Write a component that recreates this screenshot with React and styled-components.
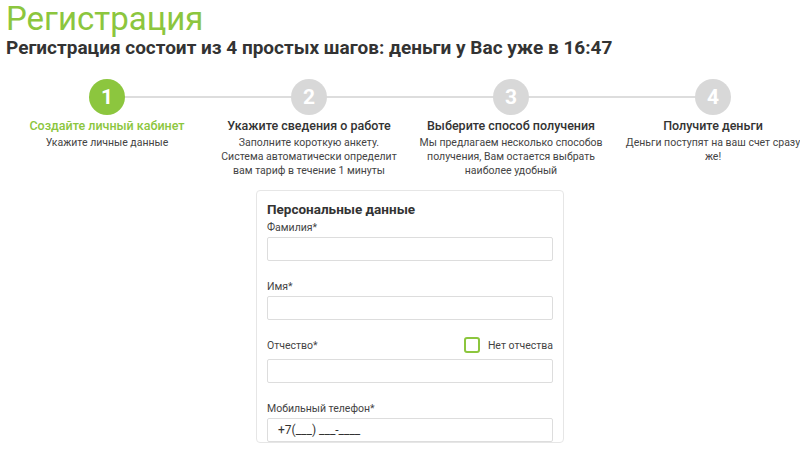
import React from 'react';
import styled, { createGlobalStyle } from 'styled-components';

const Global = createGlobalStyle`
  body { margin: 0; background: #fff; font-family: Roboto, "Noto Sans", sans-serif; color: #333; }
`;

const Page = styled.div`
  padding: 0 6px;
  width: 808px;
`;

const Title = styled.h1`
  margin: 0;
  font-size: 33px;
  font-weight: 400;
  color: #8cc63e;
  line-height: 38px;
`;

const Sub = styled.h2`
  margin: -2px 0 0;
  font-size: 19px;
  font-weight: 700;
  color: #333;
  line-height: 24px;
`;

const Steps = styled.div`
  position: relative;
  display: grid;
  grid-template-columns: repeat(4, 202px);
  margin-top: 19px;
  &::before {
    content: '';
    position: absolute;
    left: 101px;
    right: 99px;
    top: 17px;
    height: 2px;
    background: #ddd;
  }
`;

const Step = styled.div`
  display: flex;
  flex-direction: column;
  align-items: center;
  text-align: center;
  position: relative;
`;

const Circle = styled.div`
  width: 36px;
  height: 36px;
  border-radius: 50%;
  background: ${p => (p.$active ? '#8cc63e' : '#d8d8d8')};
  color: #fff;
  font-size: 21px;
  font-weight: 700;
  display: flex;
  align-items: center;
  justify-content: center;
`;

const StepTitle = styled.div`
  margin-top: 3px;
  font-size: 12.5px;
  font-weight: 500;
  color: ${p => (p.$active ? '#8cc63e' : '#333')};
`;

const StepDesc = styled.div`
  margin-top: 3px;
  font-size: 10.5px;
  line-height: 14px;
  color: #444;
  width: 184px;
`;

const Card = styled.div`
  width: 286px;
  margin: 12px 0 0 250px;
  border: 1px solid #e6e6e6;
  border-radius: 4px;
  padding: 10px 10px 0;
`;

const CardTitle = styled.div`
  font-size: 13.5px;
  font-weight: 700;
  color: #333;
`;

const Field = styled.div`
  margin-top: ${p => p.$gap}px;
`;

const LabelRow = styled.div`
  display: flex;
  justify-content: space-between;
  align-items: center;
  font-size: 10.5px;
  color: #444;
  height: ${p => (p.$tall ? 22 : 14)}px;
  margin-bottom: ${p => (p.$tall ? 3 : 3)}px;
`;

const Check = styled.label`
  display: flex;
  align-items: center;
  gap: 8px;
  font-size: 10.5px;
`;

const Box = styled.span`
  width: 12px;
  height: 12px;
  border: 2px solid #8cc63e;
  border-radius: 3px;
`;

const Input = styled.div`
  height: 22px;
  border: 1px solid #ddd;
  border-radius: 2px;
  font-size: 12px;
  color: #333;
  padding: 0 10px;
  display: flex;
  align-items: center;
`;

const steps = [
  ['Создайте личный кабинет', 'Укажите личные данные'],
  ['Укажите сведения о работе', 'Заполните короткую анкету. Система автоматически определит вам тариф в течение 1 минуты'],
  ['Выберите способ получения', 'Мы предлагаем несколько способов получения, Вам остается выбрать наиболее удобный'],
  ['Получите деньги', 'Деньги поступят на ваш счет сразу же!'],
];

export default function App() {
  return (
    <Page>
      <Global />
      <Title>Регистрация</Title>
      <Sub>Регистрация состоит из 4 простых шагов: деньги у Вас уже в 16:47</Sub>
      <Steps>
        {steps.map(([t, d], i) => (
          <Step key={i}>
            <Circle $active={i === 0}>{i + 1}</Circle>
            <StepTitle $active={i === 0}>{t}</StepTitle>
            <StepDesc>{d}</StepDesc>
          </Step>
        ))}
      </Steps>
      <Card>
        <CardTitle>Персональные данные</CardTitle>
        <Field $gap={3}>
          <LabelRow>Фамилия*</LabelRow>
          <Input />
        </Field>
        <Field $gap={18}>
          <LabelRow>Имя*</LabelRow>
          <Input />
        </Field>
        <Field $gap={14}>
          <LabelRow $tall>Отчество*<Check><Box />Нет отчества</Check></LabelRow>
          <Input />
        </Field>
        <Field $gap={18}>
          <LabelRow>Мобильный телефон*</LabelRow>
          <Input>+7(___) ___-____</Input>
        </Field>
      </Card>
    </Page>
  );
}
